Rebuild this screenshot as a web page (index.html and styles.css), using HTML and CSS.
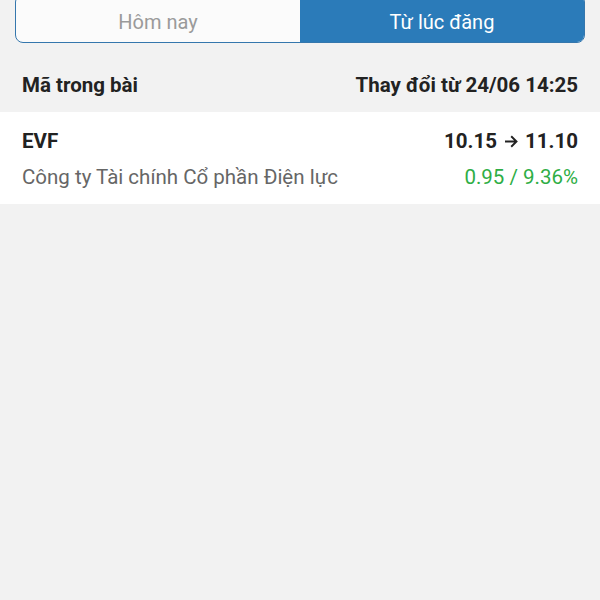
FILE: index.html
```html
<!DOCTYPE html>
<html lang="vi">
<head>
<meta charset="utf-8">
<link rel="stylesheet" href="styles.css">
</head>
<body>
<div class="tabs">
  <div class="tab">Hôm nay</div>
  <div class="tab active">Từ lúc đăng</div>
</div>
<div class="head">
  <span>Mã trong bài</span>
  <span>Thay đổi từ 24/06 14:25</span>
</div>
<div class="card">
  <div class="line">
    <span class="code">EVF</span>
    <span class="price">10.15 <svg class="arrow" width="14" height="13" viewBox="0 0 14 13"><path d="M1 6.5H12.5M7.2 1.3L12.5 6.5L7.2 11.7" fill="none" stroke="#222" stroke-width="1.9"/></svg> 11.10</span>
  </div>
  <div class="line">
    <span class="name">Công ty Tài chính Cổ phần Điện lực</span>
    <span class="chg">0.95 / 9.36%</span>
  </div>
</div>
</body>
</html>
```
FILE: styles.css
```css
html, body {
  margin: 0;
  padding: 0;
  background: #f2f2f2;
  font-family: Roboto, "Noto Sans", sans-serif;
  height: 100%;
}
.tabs {
  display: flex;
  margin: -6px 15px 0 15px;
  height: 47px;
  border: 1.5px solid #3577ad;
  border-radius: 8px;
  overflow: hidden;
  background: #fbfbfb;
}
.tab {
  flex: 1;
  display: flex;
  align-items: center;
  justify-content: center;
  padding-top: 6px;
  font-size: 20px;
  color: #9a9a9a;
}
.tab.active {
  background: #2b7bb9;
  color: #ffffff;
}
.head {
  display: flex;
  justify-content: space-between;
  align-items: flex-start;
  height: 40px;
  padding: 29px 22px 0 22px;
  font-size: 20.5px;
  line-height: 26px;
  font-weight: 700;
  color: #222;
}
.card {
  background: #fff;
  padding: 16px 22px 14px 22px;
  display: flex;
  flex-direction: column;
  gap: 10px;
}
.line {
  display: flex;
  justify-content: space-between;
  align-items: center;
  font-size: 20.5px;
  line-height: 26px;
}
.code, .price {
  font-weight: 700;
  color: #222;
}
.price {
  display: flex;
  align-items: center;
  gap: 7px;
}
.arrow {
  display: block;
}
.name {
  color: #666;
}
.chg {
  color: #2eae45;
}
```
